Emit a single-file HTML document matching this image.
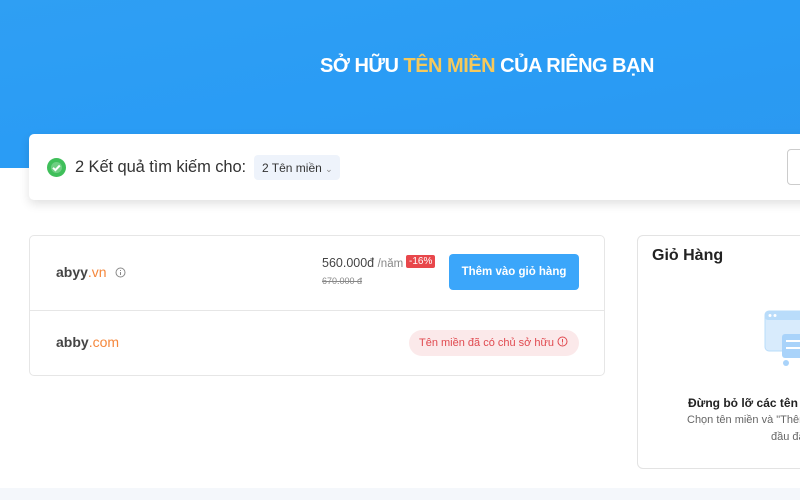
<!DOCTYPE html>
<html><head><meta charset="utf-8"><style>
*{box-sizing:border-box;margin:0;padding:0}
body{width:800px;height:500px;overflow:hidden;background:#fff;font-family:"Liberation Sans",sans-serif;position:relative}
.banner{position:absolute;left:0;top:0;width:800px;height:168px;background:linear-gradient(170deg,#2f9ff3 0%,#2a9cf5 50%,#2b98f0 100%)}
.title{position:absolute;top:55px;left:320px;font-weight:bold;font-size:20px;color:#fff;letter-spacing:-0.5px;white-space:nowrap}
.title span{color:#f5c95c}
.search{position:absolute;left:29px;top:134px;width:800px;height:66px;background:#fff;border-radius:5px;box-shadow:0 4px 10px rgba(0,0,0,.12)}
.chk{position:absolute;left:18px;top:24px;width:19px;height:19px;border-radius:50%;background:#3fbf5a}
.s1{position:absolute;left:46px;top:24px;font-size:16.5px;color:#333;letter-spacing:-0.1px}
.pill{position:absolute;left:225px;top:21px;width:86px;height:25px;background:#eef3fb;border-radius:4px;font-size:12px;color:#333;padding:6px 0 0 8px;white-space:nowrap}
.inp{position:absolute;left:758px;top:15px;width:60px;height:36px;border:1px solid #ccc;border-radius:4px}
.bottom{position:absolute;left:0;top:488px;width:800px;height:12px;background:#f4f7fb}
.res{position:absolute;left:29px;top:235px;width:576px;height:141px;border:1px solid #e6e6e6;border-radius:5px;background:#fff}
.div{position:absolute;left:0;top:74px;width:100%;height:1px;background:#e6e6e6}
.dom{position:absolute;left:26px;font-size:14px;color:#444;font-weight:bold}
.dom span{color:#f5883d;font-weight:normal}
.price{position:absolute;left:292px;top:20px;font-size:12.5px;color:#444;white-space:nowrap}
.price small{font-size:11.5px;color:#888}
.badge{position:absolute;left:376px;top:19px;background:#e8474b;color:#fff;font-size:10px;padding:1px 3px;border-radius:2px}
.old{position:absolute;left:292px;top:40px;font-size:9px;color:#888;text-decoration:line-through}
.btn{position:absolute;left:419px;top:18px;width:130px;height:36px;background:#3ba6fa;border-radius:4px;color:#fff;font-weight:bold;font-size:11.5px;text-align:center;line-height:36px}
.taken{position:absolute;left:379px;top:94px;width:170px;height:26px;background:#fbe9ea;border-radius:13px;color:#e0494f;font-size:11px;line-height:26px;padding-left:10px;white-space:nowrap}
.cart{position:absolute;left:637px;top:235px;width:180px;height:234px;border:1px solid #e3e3e3;border-radius:6px;background:#fff}
.cart h3{position:absolute;left:14px;top:11px;font-size:16px;color:#222}
.c1{position:absolute;left:50px;top:160px;font-size:12px;font-weight:bold;color:#222;white-space:nowrap}
.c2{position:absolute;left:49px;top:178px;font-size:11px;color:#666;white-space:nowrap}
.c3{position:absolute;left:133px;top:195px;font-size:11px;color:#666;white-space:nowrap}
</style></head><body>
<div class="banner"></div>
<div class="title">SỞ HỮU <span>TÊN MIỀN</span> CỦA RIÊNG BẠN</div>
<div class="search">
<div class="chk"><svg width="19" height="19"><circle cx="9.5" cy="9.5" r="5.5" fill="#fff" opacity=".25"/><path d="M6 9.8l2.4 2.3 4.4-4.6" stroke="#fff" stroke-width="2" fill="none"/></svg></div>
<div class="s1">2 Kết quả tìm kiếm cho:</div>
<div class="pill">2 Tên miền <span style="font-size:9px;color:#888">⌄</span></div>
<div class="inp"></div>
</div>
<div class="res">
<div class="dom" style="top:28px">abyy<span>.vn</span> <svg width="11" height="11" style="margin-left:4px;vertical-align:-1px"><circle cx="5.5" cy="5.5" r="4.5" stroke="#888" fill="none"/><path d="M5.5 5v3M5.5 3v1" stroke="#888"/></svg></div>
<div class="price">560.000đ <small>/năm</small></div>
<div class="badge">-16%</div>
<div class="old">670.000 đ</div>
<div class="btn">Thêm vào giỏ hàng</div>
<div class="div"></div>
<div class="dom" style="top:98px">abby<span>.com</span></div>
<div class="taken">Tên miền đã có chủ sở hữu <svg width="11" height="11" style="vertical-align:-1px"><circle cx="5.5" cy="5.5" r="4.5" stroke="#e0494f" fill="none"/><path d="M5.5 3v3.5M5.5 7.5v1" stroke="#e0494f"/></svg></div>
</div>
<div class="cart">
<h3>Giỏ Hàng</h3>
<svg style="position:absolute;left:126px;top:74px" width="50" height="60"><rect x="1" y="1" width="44" height="40" rx="4" fill="#d8ebfc" stroke="#b9dcfa"/><rect x="1" y="1" width="44" height="9" rx="3" fill="#b9dcfa"/><circle cx="6" cy="5.5" r="1.5" fill="#fff"/><circle cx="11" cy="5.5" r="1.5" fill="#fff"/><rect x="18" y="24" width="30" height="24" rx="3" fill="#a9d3fa"/><rect x="22" y="30" width="22" height="2" fill="#fff"/><rect x="22" y="37" width="22" height="2" fill="#fff"/><circle cx="22" cy="53" r="3" fill="#a9d3fa"/><circle cx="40" cy="53" r="3" fill="#a9d3fa"/></svg>
<div class="c1">Đừng bỏ lỡ các tên miền</div>
<div class="c2">Chọn tên miền và "Thêm vào</div>
<div class="c3">đầu đăng</div>
</div>
<div class="bottom"></div>
</body></html>
